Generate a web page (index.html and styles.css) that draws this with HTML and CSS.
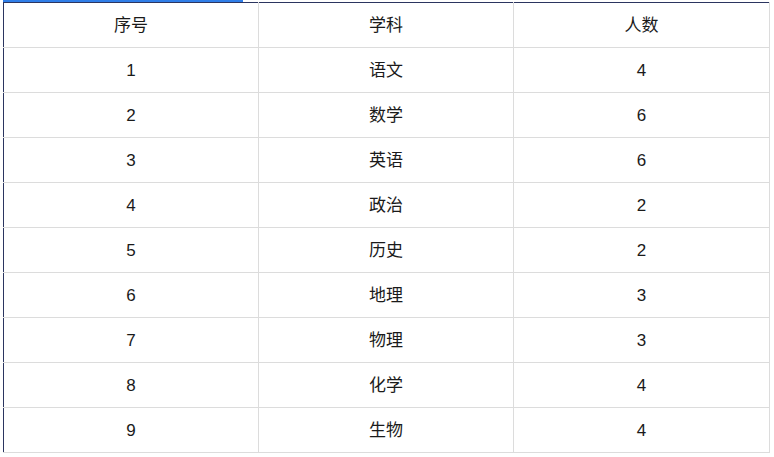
FILE: index.html
```html
<!DOCTYPE html>
<html lang="zh-CN">
<head>
<meta charset="utf-8">
<title>表格</title>
<link rel="stylesheet" href="styles.css">
</head>
<body>
<div class="frame">
  <div class="progress"></div>
  <table class="grid">
    <colgroup><col class="c1"><col class="c2"><col class="c3"></colgroup>
    <thead>
      <tr><th>序号</th><th>学科</th><th>人数</th></tr>
    </thead>
    <tbody>
      <tr><td>1</td><td>语文</td><td>4</td></tr>
      <tr><td>2</td><td>数学</td><td>6</td></tr>
      <tr><td>3</td><td>英语</td><td>6</td></tr>
      <tr><td>4</td><td>政治</td><td>2</td></tr>
      <tr><td>5</td><td>历史</td><td>2</td></tr>
      <tr><td>6</td><td>地理</td><td>3</td></tr>
      <tr><td>7</td><td>物理</td><td>3</td></tr>
      <tr><td>8</td><td>化学</td><td>4</td></tr>
      <tr><td>9</td><td>生物</td><td>4</td></tr>
    </tbody>
  </table>
</div>
</body>
</html>
```

FILE: styles.css
```css
html, body {
  margin: 0;
  padding: 0;
  background: #ffffff;
}
body {
  font-family: "Liberation Sans", "Noto Sans CJK SC", sans-serif;
  font-size: 17px;
  color: #1a1a1a;
}
.frame {
  margin-left: 3px;
  width: 767px;
}
.progress {
  width: 240px;
  height: 2px;
  background: #2f7ee8;
}
.grid {
  border-collapse: collapse;
  table-layout: fixed;
  width: 767px;
  border-left: 1px solid #2b3560;
  border-top: 1px solid #2b3560;
}
.c1 { width: 255px; }
.c2 { width: 255px; }
.c3 { width: 256px; }
.grid tr {
  height: 45px;
}
.grid th,
.grid td {
  border: 1px solid #dcdcdc;
  text-align: center;
  vertical-align: middle;
  padding: 2px 0 0;
  font-weight: normal;
  font-size: 17px;
  line-height: 20px;
}
.grid th {
  border-top: 1px solid #2b3560;
}
.grid th:first-child,
.grid td:first-child {
  border-left: 1px solid #2b3560;
}
```
